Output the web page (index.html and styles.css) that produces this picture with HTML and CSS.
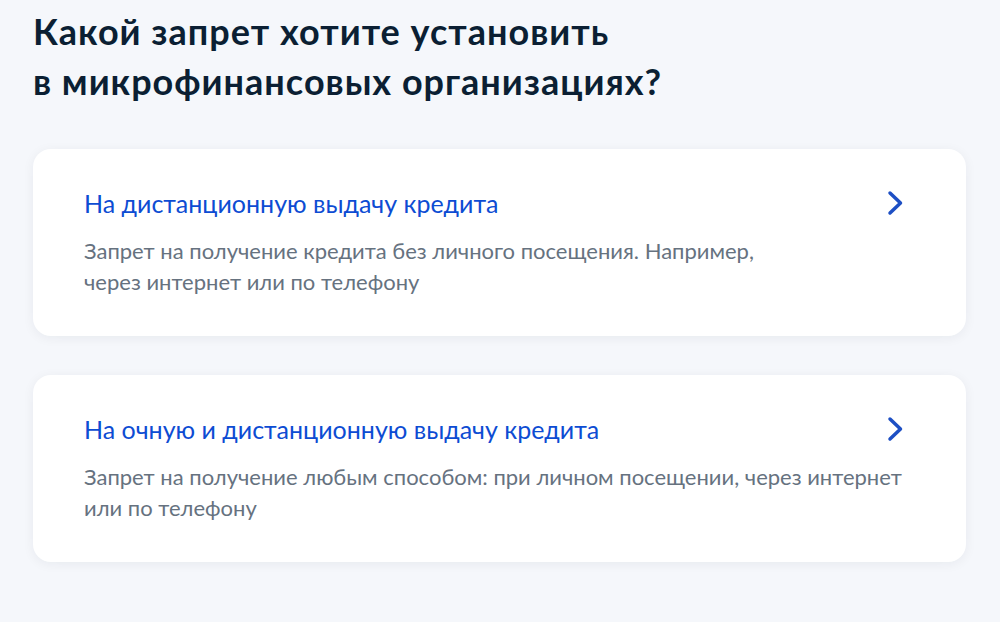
FILE: index.html
```html
<!DOCTYPE html>
<html lang="ru">
<head>
    <meta charset="UTF-8">
    <meta name="viewport" content="width=device-width, initial-scale=1.0">
    <title>Запрет на кредиты</title>
    <link rel="stylesheet" href="styles.css">
</head>
<body>
    <div class="page">
        <h1>Какой запрет хотите установить<br>в микрофинансовых организациях?</h1>

        <a class="option" href="#">
            <div class="option-head">
                <span class="option-title">На дистанционную выдачу кредита</span>
                <svg class="chevron" width="18" height="26" viewBox="0 0 18 26">
                    <polyline points="4,3 14.5,13 4,23" />
                </svg>
            </div>
            <p class="option-text">Запрет на получение кредита без личного посещения. Например,<br>через интернет или по телефону</p>
        </a>

        <a class="option" href="#">
            <div class="option-head">
                <span class="option-title">На очную и дистанционную выдачу кредита</span>
                <svg class="chevron" width="18" height="26" viewBox="0 0 18 26">
                    <polyline points="4,3 14.5,13 4,23" />
                </svg>
            </div>
            <p class="option-text">Запрет на получение любым способом: при личном посещении, через интернет<br>или по телефону</p>
        </a>
    </div>
</body>
</html>
```

FILE: styles.css
```css
* {
    margin: 0;
    padding: 0;
    box-sizing: border-box;
    font-family: 'Lato', 'Noto Sans', sans-serif;
}

body {
    background: #f5f7fb;
    height: 100vh;
    overflow: hidden;
}

.page {
    padding: 6px 34px 0 33px;
    display: flex;
    flex-direction: column;
    gap: 39px;
}

h1 {
    font-size: 36px;
    line-height: 50px;
    font-weight: 700;
    letter-spacing: 1px;
    color: #0b1f33;
    margin-bottom: 4px;
}

.option {
    display: block;
    background: #ffffff;
    border-radius: 18px;
    padding: 39px 62px 39px 51px;
    text-decoration: none;
    box-shadow: 0 2px 12px rgba(11, 31, 51, 0.06);
}

.option-head {
    display: flex;
    justify-content: space-between;
    align-items: center;
    margin-bottom: 17px;
}

.option-title {
    font-size: 25px;
    line-height: 30px;
    color: #0d4cd3;
}

.chevron {
    flex-shrink: 0;
}

.chevron polyline {
    fill: none;
    stroke: #1d4fc4;
    stroke-width: 3.5;
    stroke-linecap: round;
    stroke-linejoin: round;
}

.option-text {
    font-size: 22px;
    line-height: 31px;
    color: #66727f;
}
```
